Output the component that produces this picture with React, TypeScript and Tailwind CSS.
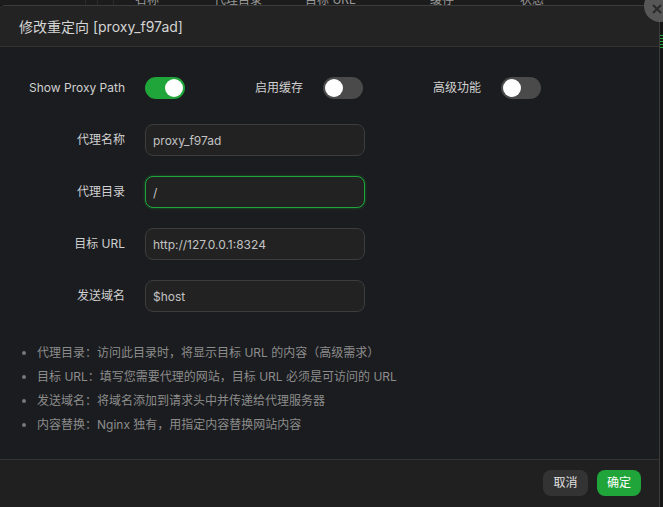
import { useState } from "react";

const font = { fontFamily: 'Inter, "Noto Sans CJK SC", sans-serif' };

const columns = [
  { label: "名称", left: "left-[135px]" },
  { label: "代理目录", left: "left-[214px]" },
  { label: "目标 URL", left: "left-[305px]" },
  { label: "缓存", left: "left-[430px]" },
  { label: "状态", left: "left-[520px]" },
];

const tips = [
  "代理目录：访问此目录时，将显示目标 URL 的内容（高级需求）",
  "目标 URL：填写您需要代理的网站，目标 URL 必须是可访问的 URL",
  "发送域名：将域名添加到请求头中并传递给代理服务器",
  "内容替换：Nginx 独有，用指定内容替换网站内容",
];

function Toggle({ on, onChange }: { on: boolean; onChange: () => void }) {
  return (
    <button
      type="button"
      onClick={onChange}
      className={`flex h-[22px] w-[40px] shrink-0 items-center rounded-full px-[2px] ${
        on ? "justify-end bg-[#20a53a]" : "justify-start bg-[#4a4a4a]"
      }`}
    >
      <span className="h-[18px] w-[18px] rounded-full bg-white" />
    </button>
  );
}

export default function App() {
  const [showPath, setShowPath] = useState(true);
  const [cache, setCache] = useState(false);
  const [advanced, setAdvanced] = useState(false);
  const [values, setValues] = useState({
    name: "proxy_f97ad",
    dir: "/",
    url: "http://127.0.0.1:8324",
    host: "$host",
  });

  const fields: { key: keyof typeof values; label: string; focused?: boolean }[] = [
    { key: "name", label: "代理名称" },
    { key: "dir", label: "代理目录", focused: true },
    { key: "url", label: "目标 URL" },
    { key: "host", label: "发送域名" },
  ];

  return (
    <div className="relative h-[507px] w-[663px] overflow-hidden bg-[#161616]" style={font}>
      {/* table behind the modal */}
      <div className="relative h-[5px] overflow-hidden bg-[#1c1c1c] text-[12px] text-[#9a9a9a]">
        <div className="absolute left-[85px] top-0 h-[5px] w-px bg-[#2c2c2c]" />
        <div className="absolute left-[97px] top-0 h-[5px] w-px bg-[#2c2c2c]" />
        <div className="absolute left-[113px] top-0 h-[5px] w-px bg-[#2c2c2c]" />
        {columns.map((c) => (
          <span key={c.label} className={`absolute top-[-8px] leading-[16px] ${c.left}`}>
            {c.label}
          </span>
        ))}
      </div>
      <div className="absolute right-0 top-[35px] flex w-[3px] flex-col gap-[2px]">
        <span className="h-px bg-[#20a53a]" />
        <span className="h-px bg-[#20a53a]" />
        <span className="h-px bg-[#20a53a]" />
        <span className="h-px bg-[#20a53a]" />
        <span className="h-px bg-[#20a53a]" />
      </div>

      {/* modal */}
      <div className="absolute left-[-1px] top-[5px] flex h-[510px] w-[661px] flex-col overflow-hidden rounded-tl-[6px] border border-[#3c3c3c] bg-[#1b1c1f]">
        <div className="flex h-[41px] shrink-0 items-center border-b border-[#333] bg-[#232323] pl-[19px] text-[14px] text-[#d4d4d4]">
          修改重定向 [proxy_f97ad]
        </div>

        <div className="flex flex-1 flex-col pt-[30px]">
          <div className="flex items-center text-[12px] text-[#d0d0d0]">
            <div className="flex w-[185px] items-center justify-end gap-[20px]">
              <span>Show Proxy Path</span>
              <Toggle on={showPath} onChange={() => setShowPath(!showPath)} />
            </div>
            <div className="flex w-[178px] items-center justify-end gap-[20px]">
              <span>启用缓存</span>
              <Toggle on={cache} onChange={() => setCache(!cache)} />
            </div>
            <div className="flex w-[178px] items-center justify-end gap-[20px]">
              <span>高级功能</span>
              <Toggle on={advanced} onChange={() => setAdvanced(!advanced)} />
            </div>
          </div>

          <div className="mt-[25px] flex flex-col gap-[20px]">
            {fields.map((f) => (
              <div key={f.key} className="flex items-center gap-[20px]">
                <label className="w-[125px] text-right text-[12px] text-[#d0d0d0]">{f.label}</label>
                <input
                  value={values[f.key]}
                  autoFocus={f.focused}
                  onChange={(e) => setValues({ ...values, [f.key]: e.target.value })}
                  className={`h-[32px] w-[220px] rounded-[8px] border bg-[#222222] px-[7px] text-[12px] text-[#c2c2c2] caret-[#20a53a] outline-none ${
                    f.focused
                      ? "border-[#20a53a] shadow-[0_0_3px_rgba(32,165,58,0.5)]"
                      : "border-[#3d3d3d]"
                  }`}
                />
              </div>
            ))}
          </div>

          <ul className="mt-[29px] flex flex-col pl-[22px] text-[12px] leading-[24px] text-[#8c8c8c]">
            {tips.map((t) => (
              <li key={t} className="flex items-center gap-[11px]">
                <span className="h-[4px] w-[4px] rounded-full bg-[#777]" />
                <span>{t}</span>
              </li>
            ))}
          </ul>
        </div>

        <div className="flex h-[55px] shrink-0 items-start justify-end gap-[9px] border-t border-[#333] bg-[#202020] pr-[18px] pt-[10px]">
          <button className="h-[26px] w-[45px] rounded-[8px] bg-[#333333] text-[12px] text-[#e0e0e0]">取消</button>
          <button className="h-[26px] w-[44px] rounded-[8px] bg-[#20a53a] text-[12px] text-white">确定</button>
        </div>
      </div>

      <button className="absolute left-[644px] top-[-10px] flex h-[32px] w-[32px] items-center justify-center rounded-full bg-[#575757] pr-[6px] pt-[6px] text-[#2a2a2a]">
        <svg width="12" height="12" viewBox="0 0 12 12" fill="none" stroke="currentColor" strokeWidth="2">
          <path d="M2 2l8 8M10 2l-8 8" />
        </svg>
      </button>
    </div>
  );
}
